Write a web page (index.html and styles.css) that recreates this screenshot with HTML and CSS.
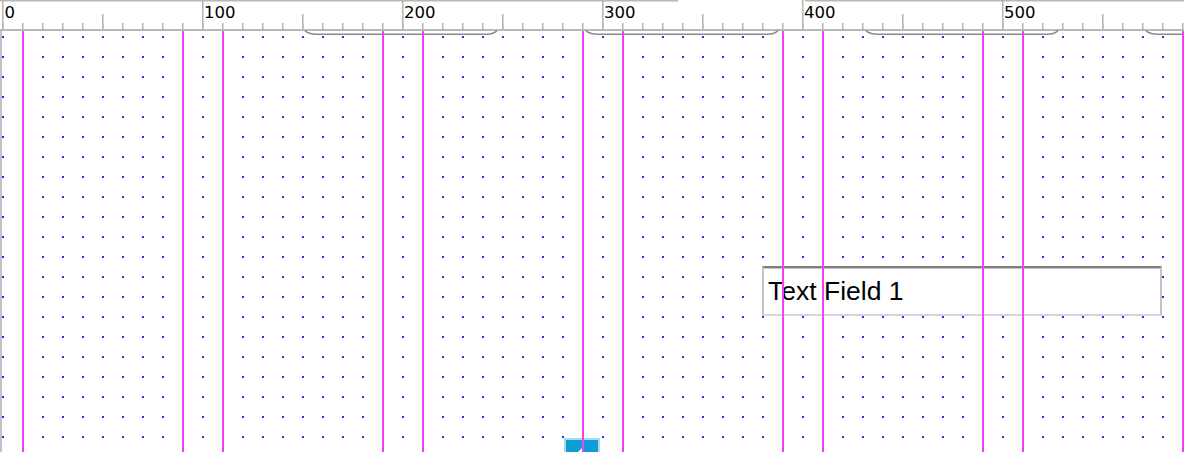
FILE: index.html
```html
<!DOCTYPE html>
<html>
<head>
<meta charset="utf-8">
<link rel="stylesheet" href="styles.css">
</head>
<body>
<div class="page">
  <div class="ruler">
    <svg class="ruler-svg" width="1184" height="38" viewBox="0 0 1184 38">
      <defs>
        <pattern id="minor" patternUnits="userSpaceOnUse" x="22" y="0" width="20" height="31">
          <rect x="0" y="23" width="1.5" height="7" fill="#b4b4b4"/>
        </pattern>
        <pattern id="mid" patternUnits="userSpaceOnUse" x="102" y="0" width="200" height="31">
          <rect x="0" y="14" width="1.5" height="16" fill="#b4b4b4"/>
        </pattern>
        <pattern id="major" patternUnits="userSpaceOnUse" x="2" y="0" width="200" height="31">
          <rect x="0" y="0" width="1.5" height="30" fill="#b4b4b4"/>
        </pattern>
      </defs>
      <rect x="0" y="0" width="1184" height="31" fill="#fff"/>
      <rect x="0" y="0" width="678" height="1.5" fill="#b8b8b8"/>
      <rect x="805" y="0" width="379" height="1.5" fill="#b8b8b8"/>
      <rect x="0" y="0" width="1184" height="31" fill="url(#minor)"/>
      <rect x="0" y="0" width="1184" height="31" fill="url(#mid)"/>
      <rect x="0" y="0" width="1184" height="31" fill="url(#major)"/>
      <rect x="0" y="29" width="1184" height="2" fill="#b8b8b8"/>
      <g class="labels">
        <text x="4.5" y="17.5">0</text>
        <text x="204" y="17.5">100</text>
        <text x="404" y="17.5">200</text>
        <text x="604" y="17.5">300</text>
        <text x="804" y="17.5">400</text>
        <text x="1004" y="17.5">500</text>
      </g>
      <g class="brackets" fill="none" stroke="#8a8a8a" stroke-width="1.6">
        <path d="M305 30.5 Q308 34.2 317 34.2 H486 Q494 34.2 497 30.5"/>
        <path d="M586 30.5 Q589 34.2 598 34.2 H767 Q775 34.2 778 30.5"/>
        <path d="M866 30.5 Q869 34.2 878 34.2 H1047 Q1055 34.2 1058 30.5"/>
        <path d="M1146 30.5 Q1149 34.2 1158 34.2 H1190"/>
      </g>
    </svg>
  </div>
  <div class="canvas">
    <div class="text-field">Text Field 1</div>
    <div class="widget">
      <svg class="widget-mark" width="36" height="20" viewBox="0 0 36 20">
        <polygon points="12,14 18,8 18,14" fill="#ffffff"/>
      </svg>
    </div>
    <div class="guides">
      <div class="col"></div>
      <div class="col"></div>
      <div class="col"></div>
      <div class="col"></div>
      <div class="col"></div>
      <div class="col"></div>
    </div>
  </div>
</div>
</body>
</html>
```
FILE: styles.css
```css
html, body {
  margin: 0;
  padding: 0;
  background: #ffffff;
}

.page {
  width: 1184px;
  height: 452px;
  overflow: hidden;
  display: flex;
  flex-direction: column;
}

.ruler {
  position: relative;
  z-index: 1;
  height: 31px;
  flex: none;
}

.ruler-svg {
  display: block;
  overflow: visible;
}

.labels text {
  font-family: "DejaVu Sans", sans-serif;
  font-size: 16.5px;
  fill: #000000;
}

.canvas {
  position: relative;
  flex: 1;
  border-left: 2px solid #c2c2c2;
  background-color: #ffffff;
  background-image: conic-gradient(from 270deg at 2px 2px, #0a3cf8 25%, transparent 0);
  background-size: 20px 20px;
  background-position: 0px 5px;
  overflow: hidden;
}

.text-field {
  position: absolute;
  left: 760px;
  top: 235px;
  width: 400px;
  height: 50px;
  box-sizing: border-box;
  background: #ffffff;
  border: 2px solid #c4c4c4;
  border-top-color: #7f7f7f;
  border-bottom-color: #d6d6d6;
  box-shadow: inset 0 1px 0 #c8c8c8;
  padding: 8px 4px 8px 4px;
  font-family: "Liberation Sans", Arial, sans-serif;
  font-size: 26.5px;
  line-height: 30px;
  color: #000000;
  white-space: nowrap;
}

.widget {
  position: absolute;
  left: 562px;
  top: 407px;
  width: 36px;
  height: 50px;
  box-sizing: border-box;
  background: #0c9cd6;
  border: 2px solid #a9d9ef;
}

.widget-mark {
  position: absolute;
  left: -2px;
  top: 0;
  display: block;
}

.guides {
  position: absolute;
  z-index: 2;
  top: 0;
  bottom: 0;
  left: -2px;
  right: 0;
  display: flex;
  gap: 38px;
  padding-left: 22px;
  pointer-events: none;
}

.col {
  flex: none;
  width: 162px;
  box-sizing: border-box;
  border-left: 2px solid #f63ef3;
  border-right: 2px solid #f63ef3;
}
```
